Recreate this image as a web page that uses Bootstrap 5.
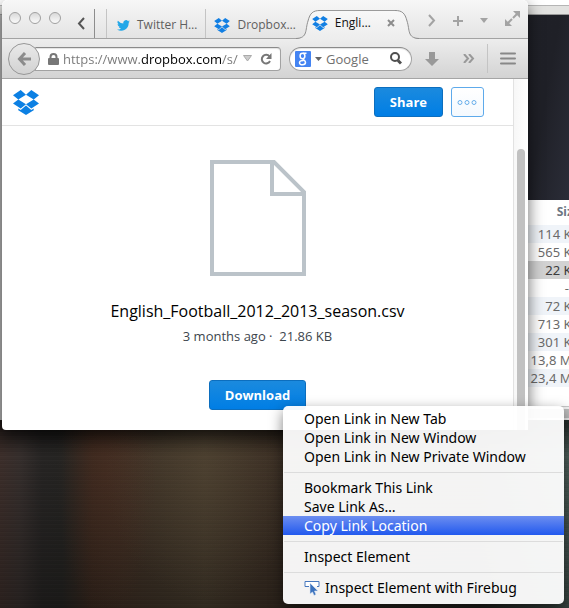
<!DOCTYPE html>
<html lang="en">
<head>
<meta charset="utf-8">
<meta name="viewport" content="width=device-width, initial-scale=1">
<title>English_Football_2012_2013_season.csv</title>
<link href="https://cdn.jsdelivr.net/npm/bootstrap@5.3.0/dist/css/bootstrap.min.css" rel="stylesheet">
<style>
body{font-family:"Open Sans","Noto Sans",sans-serif;font-size:13px;line-height:18px;color:#000}
.desktop{min-height:100vh;background:
 radial-gradient(ellipse 50px 150px at 106px 470px,rgba(84,46,32,.3),transparent),
 radial-gradient(ellipse 100px 130px at 205px 470px,rgba(88,74,54,.35),transparent),
 linear-gradient(to bottom,rgba(0,0,0,.5) 425px,rgba(0,0,0,0) 455px,rgba(0,0,0,.3) 608px),
 repeating-linear-gradient(to bottom,rgba(255,255,255,.015) 0 1px,transparent 1px 3px,rgba(0,0,0,.04) 3px 4px),
 linear-gradient(to right,#3c2e2a 0,#352e2c 20px,#262423 42px,#252422 62px,#39291f 92px,#3e2f24 125px,#3f3428 160px,#463b2d 205px,#3c3025 260px,#362b22 300px,#2b2925 480px,#4d5f5a 100%)}
.back-window{top:0;left:0;height:420px;background:#b9b9b9}
.back-top{height:15px;background:linear-gradient(#fff 0 5px,#b5b5b5 5px 6px,#e2e2e0 6px 14px,#999 14px)}
.back-dark{height:185px;margin-left:8px;background:linear-gradient(100deg,#23242b 40%,#1f2027 93%,#2b2d38)}
.files{height:206px;margin:0 -11px 0 8px}
.files-foot{height:14px;margin-left:8px;background:linear-gradient(#c8c8c8 0 1px,#f3f3f3 1px 3px,#bdbdbd 3px 12px,#eee 12px)}
.files table{font:13px/18px "Noto Sans",sans-serif;color:#6a6a6a;text-align:right}
.files th{height:24px;font-size:12px;color:#6c7682;border-bottom:1px solid #bbb;padding:0}
.files td{height:18px;padding:0}
.files td.none{padding-right:7px}
.files tbody tr:nth-child(odd){background:#f0f4f9}
.files tbody tr.chosen{background:#d2d2d2;color:#3c3c3c}
.files thead{border-bottom:2px solid #fff}
.browser{top:0;left:2px;right:41px;height:430px;border-radius:5px 5px 4px 4px;background:#fff;box-shadow:0 6px 16px rgba(0,0,0,.6)}
.tabstrip{height:39px;background:linear-gradient(#f7f7f7,#e4e4e4);border-bottom:1px solid #a3a3a3;color:#5f5f5f;font-size:12px}
.lamps{padding-left:7px}
.lamp{width:12px;height:12px;border:1px solid #a0a0a0;border-radius:50%;background:linear-gradient(#d9d9d9,#fafafa);padding:0}
.plain{border:0;background:none;padding:0;color:inherit;line-height:18px;white-space:nowrap}
.plain svg{display:block}
.tab-label{display:flex;align-items:center;gap:7px}
.split{width:1px;height:29px;background:#8d8d8d}
.split.soft{background:#c4c4c4}
.first-edge{margin:0 10px 0 11px}
.tab-on{height:29px;margin-bottom:-1px;color:#111}
.tab-mid{height:29px;border-top:1px solid #9b9b9b;background:linear-gradient(#f8f8f8,#ededed);width:75px}
.tab-mid .tab-label{margin-left:-8px}
.toolbar{height:40px;background:linear-gradient(#ededed,#d3d3d3);border-bottom:1px solid #a5a5a5}
.back-btn{width:32px;height:32px;margin-left:6px;border:1px solid #979797;border-radius:50%;background:linear-gradient(#e9e9e9,#d2d2d2);z-index:1}
.field{height:24px;background:#fff;border:1px solid #a2a2a2;border-top-color:#8a8a8a;box-shadow:inset 0 1px 1px rgba(0,0,0,.12)}
.field input{border:0;background:none;outline:0;min-width:0;padding:0;line-height:18px}
.field .address{background:linear-gradient(to right,#777 0 78px,#000 78px 158px,#777 158px);-webkit-background-clip:text;background-clip:text;-webkit-text-fill-color:transparent}
.url-field{border-radius:0 4px 4px 0;margin-left:-5px;padding:0 8px 0 12px}
.find-field{width:123px;border-radius:12px;padding:0 5px}
.find-field input::placeholder{color:#707070;opacity:1}
.tools{padding:0 8px 0 13px}
.sheet{height:351px}
.site-head{height:47px;border-bottom:1px solid #e3e3e3;padding:0 29px 0 11px}
.btn-blue{--bs-btn-color:#fff;--bs-btn-hover-color:#fff;--bs-btn-bg:#007ee5;--bs-btn-border-color:#0c6ebe;--bs-btn-border-radius:3px;--bs-btn-padding-y:5px;--bs-btn-padding-x:15px;--bs-btn-font-size:13px;--bs-btn-font-weight:700;--bs-btn-line-height:18px;background:linear-gradient(#1b8ade,#007ee5)}
.btn-more{--bs-btn-border-color:#5eaaeb;--bs-btn-border-radius:3px;--bs-btn-padding-y:0;--bs-btn-padding-x:5px;height:30px;background:linear-gradient(#fff,#f4f9fe)}
.file-name{font-size:16px;line-height:24px;margin:23px 0 4px}
.file-meta{color:#3d464d;margin-bottom:35px}
.file-view{padding-top:34px}
.rail{width:15px;background:linear-gradient(to right,#e2e2e2 1px,#f7f7f7 1px,#fff)}
.thumb{width:8px;margin:70px 0 0 4px;background:#c1c1c1;border-radius:4px 4px 0 0}
.link-menu{top:406px;left:283px;width:281px;padding:3px 0 7px;border-radius:5px;border:0;background:rgba(255,255,255,.95);box-shadow:0 5px 14px rgba(0,0,0,.5);z-index:5;font:14px/19px "Noto Sans",sans-serif;color:#000}
.link-menu .dropdown-item{font:inherit;color:#000;padding:0 21px;line-height:19px}
.link-menu .dropdown-item.active{color:#fff;background:linear-gradient(#6c8ef0,#2259ee)}
.link-menu .dropdown-divider{margin:6px 1px 5px;border-top:1px solid #dcdcdc}
</style>
<script src="https://cdn.jsdelivr.net/npm/bootstrap@5.3.0/dist/js/bootstrap.bundle.min.js"></script>
</head>
<body>
<svg class="d-none" xmlns="http://www.w3.org/2000/svg">
 <symbol id="dropbox" viewBox="0 0 26 25">
  <path d="M7.700 0 13 4.700 5.300 9.500 0 5.200zM18.300 0 26 5.200 20.700 9.500 13 4.700zM0 13.600 5.300 9.500 13 14.300 7.700 18.600zM26 13.600 20.700 9.500 13 14.300 18.300 18.600zM13 15.500 7.700 20 5.300 18.500V20.200L13 25 20.700 20.200V18.500L18.300 20z"/>
 </symbol>
</svg>
<div class="desktop position-relative overflow-hidden">

 <section class="back-window position-absolute w-100 overflow-hidden" aria-label="Files">
  <div class="back-top"></div>
  <div class="back-dark"></div>
  <div class="files bg-white">
   <table class="w-100">
    <thead><tr><th scope="col">Size</th></tr></thead>
    <tbody>
     <tr><td>114 KB</td></tr><tr><td>565 KB</td></tr><tr class="chosen"><td>22 KB</td></tr>
     <tr><td class="none">--</td></tr><tr><td>72 KB</td></tr><tr><td>713 KB</td></tr>
     <tr><td>301 KB</td></tr><tr><td>13,8 MB</td></tr><tr><td>23,4 MB</td></tr>
    </tbody>
   </table>
  </div>
  <div class="files-foot"></div>
 </section>

 <main class="browser position-absolute d-flex flex-column">
  <header class="tabstrip rounded-top d-flex align-items-end">
   <div class="lamps d-flex gap-2 pb-2 align-items-center align-self-start pt-2 mt-1">
    <button class="lamp" aria-label="Close"></button><button class="lamp" aria-label="Minimize"></button><button class="lamp" aria-label="Zoom"></button>
   </div>
   <button class="plain ms-3 pe-1 me-1 pb-2" aria-label="Scroll tabs left"><svg width="9" height="13" fill="none" stroke="#555" stroke-width="2"><path d="M7 1 2 6.500 7 12"/></svg></button>
   <div class="split"></div><div class="split soft first-edge"></div>
   <button class="plain tab-label pb-1">
    <svg width="13" height="11" viewBox="0 0 24 20" fill="#22a7e8"><path d="M24 2.400a10 10 0 0 1-2.800.8A5 5 0 0 0 23.300.5a10 10 0 0 1-3.100 1.200 4.900 4.900 0 0 0-8.400 4.500A14 14 0 0 1 1.700 1a4.900 4.900 0 0 0 1.500 6.600A5 5 0 0 1 1 7a5 5 0 0 0 3.900 4.900 5 5 0 0 1-2.200.1 4.900 4.900 0 0 0 4.600 3.400A10 10 0 0 1 0 17.500 14 14 0 0 0 21.500 5z"/></svg>
    Twitter H…</button>
   <div class="split soft mx-2"></div>
   <button class="plain tab-label pb-1"><svg width="16" height="15" fill="#127fe3"><use href="#dropbox"/></svg>Dropbox…</button>
   <div class="tab-on d-flex">
    <svg width="24" height="29"><defs><linearGradient id="tab" x2="0" y2="1"><stop stop-color="#f8f8f8"/><stop offset="1" stop-color="#ededed"/></linearGradient></defs><path d="M0 29C12 28 9 20 12 11 14 3 17 .5 24 .5V29z" fill="url(#tab)"/><path d="M0 28.500C12 28 9 20 12 11 14 3 17 .5 24 .5" fill="none" stroke="#8f8f8f"/></svg>
    <div class="tab-mid d-flex align-items-center pb-1">
     <button class="plain tab-label position-relative me-auto"><svg width="16" height="15" fill="#127fe3"><use href="#dropbox"/></svg>Engli…</button>
     <button class="plain" aria-label="Close tab"><svg width="8" height="8" stroke="#8c8c8c" stroke-width="2"><path d="m1 1 6 6M7 1 1 7"/></svg></button>
    </div>
    <svg width="24" height="29"><path d="M24 29C12 28 15 20 12 11 10 3 7 .5 0 .5V29z" fill="url(#tab)"/><path d="M24 28.500C12 28 15 20 12 11 10 3 7 .5 0 .5" fill="none" stroke="#8f8f8f"/></svg>
   </div>
   <div class="d-flex flex-fill align-items-center justify-content-between ps-2 pe-2 pb-2">
    <button class="plain" aria-label="Scroll tabs right"><svg width="9" height="13" fill="none" stroke="#a3a3a3" stroke-width="2"><path d="m2 1 5 5.500L2 12"/></svg></button>
    <button class="plain" aria-label="New tab"><svg width="10" height="10" stroke="#a3a3a3" stroke-width="2"><path d="M5 0v10M0 5h10"/></svg></button>
    <button class="plain" aria-label="All tabs"><svg width="8" height="5" fill="#a3a3a3"><path d="M0 0h8L4 5z"/></svg></button>
    <button class="plain pb-1" aria-label="Full screen"><svg width="15" height="15" fill="#a3a3a3" stroke="#a3a3a3" stroke-width="2"><path d="m13 2-5 5M2 13l5-5" /><path stroke="none" d="M8 0h7v7zM0 8v7h7z"/></svg></button>
   </div>
  </header>

  <nav class="toolbar d-flex align-items-center" aria-label="Navigation">
   <button class="plain back-btn position-relative d-flex align-items-center justify-content-center flex-shrink-0" aria-label="Back"><svg width="15" height="14" fill="none" stroke="#8b8b8b" stroke-width="3"><path d="M8 1 2.500 7 8 13M3 7h11"/></svg></button>
   <div class="field url-field d-flex align-items-center flex-fill">
    <svg width="11" height="12" class="flex-shrink-0"><path d="M2.500 6V4a3 3 0 0 1 6 0v2" fill="none" stroke="#777" stroke-width="2"/><rect y="5" width="11" height="7" rx="1" fill="#777"/></svg>
    <input class="address flex-fill ms-1" type="text" aria-label="Address" value="https://www.dropbox.com/s/">
    <button class="plain ms-1 me-2" aria-label="History"><svg width="9" height="7"><path d="M.5.5h8L4.500 6z" fill="#ccc" stroke="#aaa"/></svg></button>
    <button class="plain" aria-label="Reload"><svg width="12" height="12"><path d="M9.500 3.500A4.300 4.300 0 1 0 10 8" fill="none" stroke="#777" stroke-width="2"/><path d="M11.500 0v6H6z" fill="#777"/></svg></button>
   </div>
   <div class="field find-field d-flex align-items-center ms-2 flex-shrink-0">
    <button class="plain d-flex align-items-center" aria-label="Search engine">
     <svg width="16" height="16"><rect width="16" height="16" rx="1" fill="#4484f2"/><g fill="none" stroke="#fff" stroke-width="1.500"><ellipse cx="7.500" cy="5" rx="2.400" ry="2.700"/><path d="M8 2.300h3.500M8 7.500c-1 1 2.500 1.500 2.500 3.800 0 3.300-6 3.200-6 .4 0-1.600 1.800-2.200 4-2.200"/></g></svg>
     <svg width="7" height="4" class="ms-1" fill="#666"><path d="M0 0h7L3.500 4z"/></svg></button>
    <input class="flex-fill ms-1" type="search" aria-label="Search" placeholder="Google">
    <button class="plain me-1" aria-label="Search"><svg width="12" height="13" fill="none" stroke="#4f4f4f" stroke-width="2"><circle cx="5" cy="5" r="4"/><path stroke-width="3" d="m8 8.500 3 3"/></svg></button>
   </div>
   <div class="tools d-flex align-items-center flex-shrink-0">
    <button class="plain me-4" aria-label="Downloads"><svg width="14" height="14" fill="#999"><path d="M4 0h6v7h4l-7 7-7-7h4z"/></svg></button>
    <button class="plain me-2" aria-label="More tools"><svg width="12" height="9" fill="none" stroke="#999" stroke-width="2"><path d="m1 0 4 4.500L1 9M6 0l4 4.500L6 9"/></svg></button>
    <div class="split soft ms-1 me-2"></div>
    <button class="plain ms-1 me-1" aria-label="Menu"><svg width="16" height="13" stroke="#888" stroke-width="2" stroke-linecap="round"><path d="M1 1.500h14M1 6.500h14M1 11.500h14"/></svg></button>
   </div>
  </nav>

  <div class="sheet d-flex">
   <div class="flex-fill">
    <div class="site-head d-flex align-items-center">
     <a href="#" class="me-auto" aria-label="Dropbox"><svg width="26" height="25" fill="#0c80e3" class="d-block"><use href="#dropbox"/></svg></a>
     <button class="btn btn-blue me-2">Share</button>
     <button class="btn btn-more d-flex align-items-center" aria-label="More"><svg width="21" height="7" fill="none" stroke="#66aeeb"><circle cx="3" cy="3.500" r="2"/><circle cx="10" cy="3.500" r="2"/><circle cx="17" cy="3.500" r="2"/></svg></button>
    </div>
    <div class="file-view text-center">
     <svg width="96" height="116" class="d-block mx-auto" fill="none" stroke="#bbc3c9" stroke-width="4"><path d="M2 2h62l30 30v82H2zM62 2v32h32"/></svg>
     <h1 class="file-name">English_Football_2012_2013_season.csv</h1>
     <p class="file-meta">3 months ago ·&nbsp; 21.86 KB</p>
     <button class="btn btn-blue">Download</button>
    </div>
   </div>
   <div class="rail d-flex"><div class="thumb"></div></div>
  </div>
 </main>

 <div class="dropdown-menu link-menu d-block position-absolute" aria-label="Link menu">
  <button class="dropdown-item">Open Link in New Tab</button>
  <button class="dropdown-item">Open Link in New Window</button>
  <button class="dropdown-item">Open Link in New Private Window</button>
  <hr class="dropdown-divider">
  <button class="dropdown-item">Bookmark This Link</button>
  <button class="dropdown-item">Save Link As…</button>
  <button class="dropdown-item active">Copy Link Location</button>
  <hr class="dropdown-divider">
  <button class="dropdown-item">Inspect Element</button>
  <hr class="dropdown-divider">
  <button class="dropdown-item d-flex align-items-center gap-1"><svg width="17" height="16"><path d="M5 6.500H1v-5h14v5h-2" fill="#fff" stroke="#4777bd"/><path d="M6 3v11l2.500-2 1.500 3.500 2-1-1.500-3.500H14z" fill="#3c72bd" stroke="#dde8f6" stroke-width=".6"/></svg>Inspect Element with Firebug</button>
 </div>
</div>
</body>
</html>
